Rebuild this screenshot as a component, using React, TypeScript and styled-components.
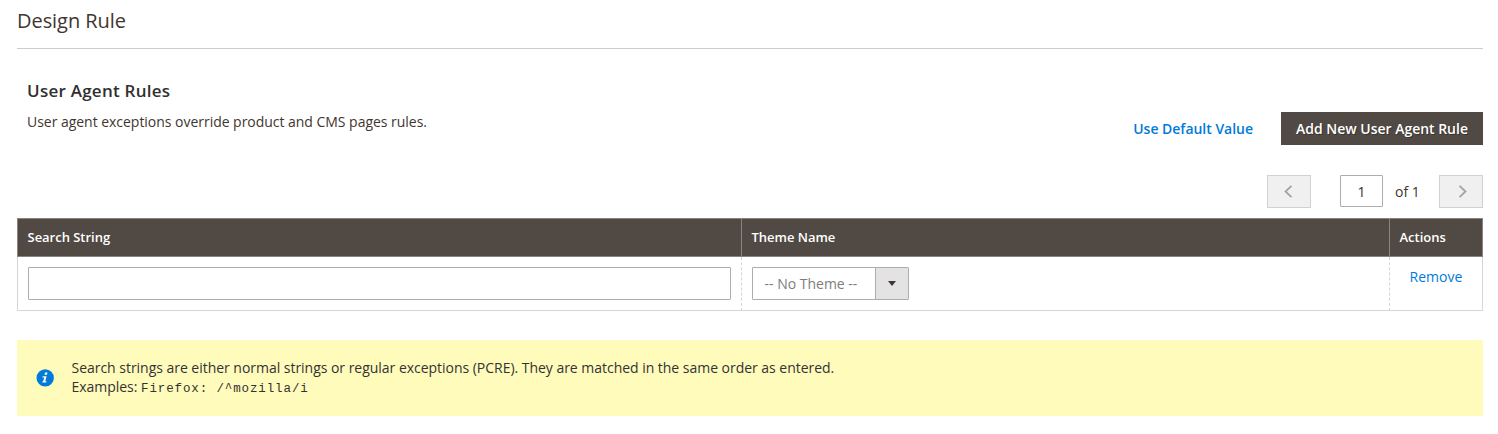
import React, { useState } from 'react';
import styled, { createGlobalStyle } from 'styled-components';

const GlobalStyle = createGlobalStyle`
  * { box-sizing: border-box; }
  body {
    margin: 0;
    background: #fff;
    color: #41362f;
    font: 400 14px/19px 'Open Sans', 'Liberation Sans', sans-serif;
  }
  button, input { font: inherit; border-radius: 0; margin: 0; }
`;

const Page = styled.main`
  height: 434px;
  padding: 0 15px 0 17px;
`;

const Title = styled.h1`
  height: 49px;
  margin: 0;
  padding-top: 7px;
  border-bottom: 1px solid #ccc;
  font-size: 20px;
  line-height: 28px;
  font-weight: 400;
  letter-spacing: -0.05px;
`;

const Intro = styled.section`
  display: flex;
  justify-content: space-between;
  height: 96px;
  padding: 30px 0 0 10px;
`;

const Heading = styled.h2`
  margin: 0 0 9px;
  font-size: 17px;
  line-height: 24px;
  font-weight: 600;
  letter-spacing: 0.25px;
  color: #303030;
`;

const Description = styled.p`
  margin: 0;
  letter-spacing: -0.03px;
`;

const Actions = styled.div`
  display: flex;
  align-items: flex-end;
  gap: 13px;
`;

const Button = styled.button<{ $primary?: boolean }>`
  height: 33px;
  padding: 0 15px;
  border: 0;
  font-weight: 600;
  letter-spacing: -0.02px;
  white-space: nowrap;
  cursor: pointer;
  background: ${(p) => (p.$primary ? '#514943' : 'transparent')};
  color: ${(p) => (p.$primary ? '#fff' : '#007bdb')};
  text-shadow: ${(p) => (p.$primary ? '1px 1px 0 rgba(0, 0, 0, 0.3)' : 'none')};
  min-width: ${(p) => (p.$primary ? '202px' : '0')};
`;

const Pager = styled.nav`
  display: flex;
  justify-content: flex-end;
  align-items: flex-start;
  height: 73px;
  padding-top: 30px;
`;

const PageButton = styled.button`
  display: flex;
  align-items: center;
  justify-content: center;
  width: 44px;
  height: 33px;
  padding: 0;
  border: 1px solid #d1d1d1;
  background: #f0f0f0;
`;

const PageInput = styled.input`
  width: 43px;
  height: 32px;
  margin: 0 12px 0 29px;
  padding: 0;
  border: 1px solid #adadad;
  border-radius: 1px;
  text-align: center;
  color: #303030;
`;

const PageTotal = styled.span`
  width: 44px;
  padding-top: 7px;
`;

const Table = styled.table`
  width: 1466px;
  border-collapse: separate;
  border-spacing: 0;
  table-layout: fixed;
`;

const HeaderCell = styled.th<{ $width: number }>`
  width: ${(p) => p.$width}px;
  height: 39px;
  padding: 0 10px 0 9.5px;
  border: 1px solid #8a837f;
  border-right-width: 0;
  background: #514943;
  color: #fff;
  font-size: 13px;
  font-weight: 600;
  letter-spacing: -0.02px;
  text-align: left;
  &:last-child { border-right-width: 1px; }
`;

const Cell = styled.td`
  height: 54px;
  padding: 10px;
  border-bottom: 1px solid #d6d6d6;
  border-left: 1px dashed #d6d6d6;
  vertical-align: top;
  &:first-child { border-left-style: solid; }
  &:last-child { border-right: 1px solid #d6d6d6; }
`;

const TextInput = styled.input`
  display: block;
  width: 100%;
  height: 33px;
  padding: 0 10px;
  border: 1px solid #adadad;
  border-radius: 1px;
`;

const Select = styled.div`
  display: flex;
  width: 157px;
  height: 33px;
  border: 1px solid #adadad;
  border-radius: 1px;
  color: #7d7d7d;
`;

const SelectValue = styled.span`
  flex: 1;
  padding: 6px 0 0 11.5px;
`;

const SelectArrow = styled.span`
  display: flex;
  align-items: center;
  justify-content: center;
  width: 33px;
  border-left: 1px solid #adadad;
  background: #e3e3e3;
`;

const RemoveLink = styled.a`
  display: block;
  padding-left: 9.5px;
  color: #007bdb;
  cursor: pointer;
`;

const Notice = styled.aside`
  display: flex;
  align-items: center;
  gap: 17.5px;
  height: 76px;
  margin-top: 29px;
  padding-left: 19px;
  background: #fffbbb;
  color: #333;
`;

const NoticeText = styled.div`
  padding-bottom: 2px;
  letter-spacing: -0.028px;
`;

const Code = styled.code`
  font: 400 12.5px/16px 'Liberation Mono', monospace;
  letter-spacing: 0.88px;
`;

const Chevron = ({ d }: { d: string }) => (
  <svg width="14" height="14" viewBox="0 0 14 14" fill="none" stroke="#a6a29f" strokeWidth="1.8">
    <path d={d} />
  </svg>
);

export default function App() {
  const [search, setSearch] = useState('');
  const [page, setPage] = useState('1');

  return (
    <>
      <GlobalStyle />
      <Page>
        <Title>Design Rule</Title>
        <Intro>
          <div>
            <Heading>User Agent Rules</Heading>
            <Description>User agent exceptions override product and CMS pages rules.</Description>
          </div>
          <Actions>
            <Button>Use Default Value</Button>
            <Button $primary>Add New User Agent Rule</Button>
          </Actions>
        </Intro>
        <Pager>
          <PageButton disabled aria-label="Previous page">
            <Chevron d="M9.5 .8 3.5 6.5l6 5.7" />
          </PageButton>
          <PageInput value={page} onChange={(e) => setPage(e.target.value)} />
          <PageTotal>of 1</PageTotal>
          <PageButton disabled aria-label="Next page">
            <Chevron d="M5.5 .8l6 5.7-6 5.7" />
          </PageButton>
        </Pager>
        <Table>
          <thead>
            <tr>
              <HeaderCell $width={724}>Search String</HeaderCell>
              <HeaderCell $width={648}>Theme Name</HeaderCell>
              <HeaderCell $width={94}>Actions</HeaderCell>
            </tr>
          </thead>
          <tbody>
            <tr>
              <Cell>
                <TextInput value={search} onChange={(e) => setSearch(e.target.value)} />
              </Cell>
              <Cell>
                <Select role="combobox" tabIndex={0}>
                  <SelectValue>-- No Theme --</SelectValue>
                  <SelectArrow>
                    <svg width="8" height="5" viewBox="0 0 8 5" fill="#41362f">
                      <path d="M0 0h8L4 5z" />
                    </svg>
                  </SelectArrow>
                </Select>
              </Cell>
              <Cell>
                <RemoveLink>Remove</RemoveLink>
              </Cell>
            </tr>
          </tbody>
        </Table>
        <Notice>
          <svg width="18" height="18" viewBox="0 0 18 18">
            <circle cx="9.2" cy="8.9" r="8.7" fill="#007bdb" />
            <path
              d="M9 3.5h2.5L11 5.8H8.5zM6.7 7.2h3.9l-1.3 5h1.2l-.3 1.3H6.3l.3-1.2h.6l1-3.8H6.4z"
              fill="#fffbe0"
            />
          </svg>
          <NoticeText>
            Search strings are either normal strings or regular exceptions (PCRE). They are matched in the same order as entered.
            <br />
            Examples: <Code>Firefox: /^mozilla/i</Code>
          </NoticeText>
        </Notice>
      </Page>
    </>
  );
}
